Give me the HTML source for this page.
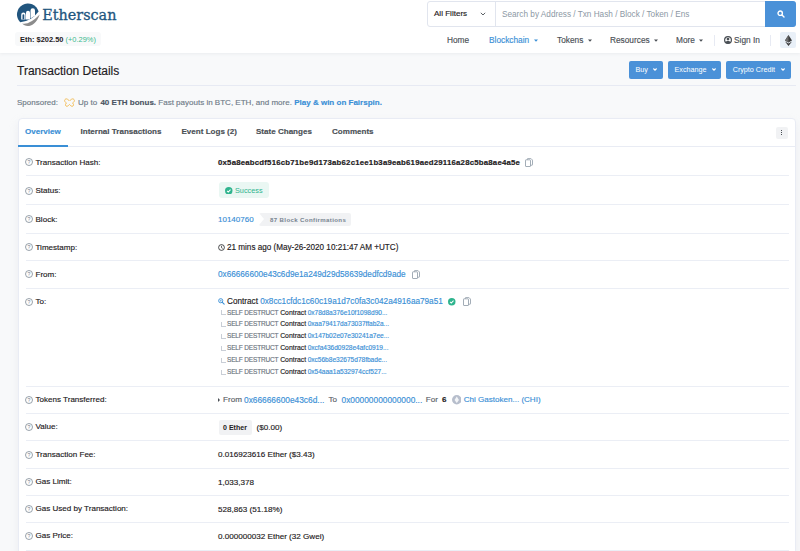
<!DOCTYPE html>
<html><head><meta charset="utf-8">
<style>
*{box-sizing:border-box;margin:0;padding:0}
html,body{width:800px;height:551px;overflow:hidden;background:#f8f9fa;font-family:"Liberation Sans",Arial,sans-serif;font-size:8px;color:#1e2022}
a{color:#3a8fd6;text-decoration:none}
.abs{position:absolute}
#hdr{position:absolute;left:0;top:0;width:800px;height:53px;background:#fff;box-shadow:0 1px 3px rgba(140,152,164,.12)}
.logo-t{position:absolute;left:42.200px;top:5.300px;font-family:"DejaVu Serif","Liberation Serif",serif;font-size:14.400px;color:#21557e;line-height:20px;-webkit-text-stroke:.3px #21557e}
.price{position:absolute;left:15px;top:32px;width:86px;height:14px;background:#f8f9fa;border-radius:3px;font-size:7.450px;line-height:15.200px;padding-left:5px;color:#1e2022;font-weight:bold;white-space:nowrap}
.price span{color:#3cb98f;font-weight:normal}
.search{position:absolute;left:427px;top:1px;width:369px;height:26px;border:1px solid #e1e5ee;border-radius:3px;background:#fff}
.search .f{position:absolute;left:0;top:0;width:68px;height:24px;border-right:1px solid #e1e5ee;line-height:24px;padding-left:6px;font-size:8.050px;color:#1e2022}
.search .i{position:absolute;left:74px;top:0;line-height:25.400px;font-size:8.230px;color:#8c98a4}
.search .b{position:absolute;right:-1px;top:-1px;width:31px;height:26px;background:#4a91d8;border-radius:0 3px 3px 0}
.nav{position:absolute;top:35px;font-size:8.300px;line-height:10px;color:#4a4f55;white-space:nowrap}
.chev{display:inline-block;width:4px;height:3px;margin-left:4.500px;vertical-align:1px}
h1{position:absolute;left:17px;top:64px;font-size:12px;font-weight:normal;color:#1e2022;line-height:14px}
.btn{position:absolute;top:61.200px;height:17.800px;background:#4a91d8;color:#fff;border-radius:2px;font-size:7.200px;line-height:17.500px;white-space:nowrap}
.hr{position:absolute;left:17px;width:779px;height:1px;background:#e7eaf3}
.spon{position:absolute;top:97.500px;font-size:8px;line-height:10px;color:#6f7b88;white-space:nowrap}
.spon b{color:#4b5563}
#card{position:absolute;left:17.500px;top:118px;width:778.500px;height:440px;background:#fff;border:1px solid #e9ecf4;border-radius:4px 4px 0 0;box-shadow:0 4px 10px rgba(189,197,209,.2)}
.tab{position:absolute;top:127px;font-size:8.050px;font-weight:bold;color:#4a4f55;line-height:10px;white-space:nowrap}
.row-l,.row-v,.nav,.tab,.sub,h1,.spon,.search .f{-webkit-text-stroke:.15px currentColor}
.row-l{position:absolute;left:35.500px;font-size:8.050px;line-height:10px;color:#1e2022;white-space:nowrap}
.q{position:absolute;left:25px;width:8px;height:8px}
.row-v{position:absolute;left:218px;font-size:8.100px;line-height:10px;color:#1e2022;white-space:nowrap}
.line{position:absolute;left:25.500px;width:763.500px;height:1px;background:#ebeef5}
.sub{position:absolute;left:227px;font-size:6.500px;line-height:8px;color:#6c757e;white-space:nowrap}
.sub b{font-weight:normal;color:#1e2022;font-size:6.850px;margin:0 1.600px 0 1.800px}.sd{font-size:6.500px;letter-spacing:-.16px}.sub a{font-size:6.550px}
.sub:before{content:"";position:absolute;left:-5.800px;top:1.500px;width:4px;height:4px;border-left:1px solid #c9ced6;border-bottom:1px solid #c9ced6}
.copy{position:absolute;width:8px;height:9px}
.ad{font-size:8.200px}
</style></head><body>
<div id="hdr"></div>
<svg class="abs" style="left:16px;top:2px" width="26" height="26" viewBox="0 0 26 26">
<path d="M4.200 20.200A11 11 0 1 1 22.600 9.600Q15.100 19.700 4.200 20.200z" fill="#21557e"/>
<path d="M23.700 12.400Q13.500 23 6.200 21.500C9.500 25.800 19 25.800 23.700 12.400z" fill="#8c8c8c"/>
<path d="M5.200 17.400v-4.600a2.200 2.200 0 0 1 4.400 0v4.600z M10 17.400v-6.600a2 2 0 0 1 4 0v6.600z M14.500 16.500v-8a2.250 2.250 0 0 1 4.500 0v5.300z" fill="#fff"/>
<path d="M6.500 17.200v-4.100a.9.900 0 0 1 1.800 0v4.100z" fill="#21557e"/>
</svg>
<div class="logo-t">Etherscan</div>
<div class="price">Eth: $202.50 <span>(+0.29%)</span></div>
<div class="search"><div class="f">All Filters</div><div class="i">Search by Address / Txn Hash / Block / Token / Ens</div><div class="b"></div></div>
<svg class="abs" style="left:480px;top:12px" width="6" height="4" viewBox="0 0 6 4"><path d="M.8.8 3 3 5.200.8" fill="none" stroke="#4a4f55" stroke-width=".9"/></svg>
<svg class="abs" style="left:776.500px;top:9.500px" width="8" height="8" viewBox="0 0 8 8"><circle cx="3.200" cy="3.200" r="2.200" fill="none" stroke="#fff" stroke-width="1.400"/><path d="M5 5 7 7" stroke="#fff" stroke-width="1.400" stroke-linecap="round"/></svg>
<div class="nav" style="left:447px">Home</div>
<div class="nav" style="left:489px;color:#3a8fd6">Blockchain<svg class="chev" viewBox="0 0 4 3"><path d="M0 .4H4L2 2.800z" fill="#3a8fd6"/></svg></div>
<div class="nav" style="left:557px">Tokens<svg class="chev" viewBox="0 0 4 3"><path d="M0 .4H4L2 2.800z" fill="#4a4f55"/></svg></div>
<div class="nav" style="left:610px">Resources<svg class="chev" viewBox="0 0 4 3"><path d="M0 .4H4L2 2.800z" fill="#4a4f55"/></svg></div>
<div class="nav" style="left:676px">More<svg class="chev" viewBox="0 0 4 3"><path d="M0 .4H4L2 2.800z" fill="#4a4f55"/></svg></div>
<div class="abs" style="left:713.500px;top:35px;width:1px;height:11px;background:#e7eaf3"></div>
<div class="nav" style="left:734px">Sign In</div>
<svg class="abs" style="left:724px;top:36px" width="8" height="8" viewBox="0 0 8 8"><circle cx="4" cy="4" r="3.400" fill="none" stroke="#4a4f55" stroke-width="1.200"/><circle cx="4" cy="3.100" r="1.400" fill="#4a4f55"/><path d="M1.400 6.200c.8-1.500 4.400-1.500 5.200 0-1 1.600-4.200 1.600-5.200 0z" fill="#4a4f55"/></svg>
<div class="abs" style="left:769.500px;top:35px;width:1px;height:11px;background:#e7eaf3"></div>
<div class="abs" style="left:780px;top:32px;width:16px;height:16px;background:#e9f0f8;border-radius:2px"></div>
<svg class="abs" style="left:784.800px;top:35px" width="7" height="11" viewBox="0 0 7 11"><path d="M3.500 0 7 5.600 3.500 7.600 0 5.600z" fill="#3c3c3d"/><path d="M3.500 0V7.600L0 5.600z" fill="#6b6b6c"/><path d="M3.500 8.400 7 6.400 3.500 11 0 6.400z" fill="#3c3c3d"/></svg>
<h1>Transaction Details</h1>
<div class="btn" style="left:629px;width:33.500px;padding-left:6.500px">Buy<svg class="chev" style="margin-left:5.500px" viewBox="0 0 4 3"><path d="M.4.500 2 2.200 3.600.5" fill="none" stroke="#fff" stroke-width="1.100"/></svg></div>
<div class="btn" style="left:668px;width:53px;padding-left:6.500px">Exchange<svg class="chev" style="margin-left:5.500px" viewBox="0 0 4 3"><path d="M.4.500 2 2.200 3.600.5" fill="none" stroke="#fff" stroke-width="1.100"/></svg></div>
<div class="btn" style="left:726px;width:65px;padding-left:6.700px">Crypto Credit<svg class="chev" style="margin-left:5.500px" viewBox="0 0 4 3"><path d="M.4.500 2 2.200 3.600.5" fill="none" stroke="#fff" stroke-width="1.100"/></svg></div>
<div class="hr" style="top:85px"></div>
<div class="spon" style="left:17px">Sponsored:</div>
<svg class="abs" style="left:63px;top:97px" width="13" height="11" viewBox="0 0 13 11"><path d="M2 2.500c1.500-1.500 3 0 4.500 1.500C8 2.500 9.500 1 11 2.500c1.200 1.500-.5 3-1.500 3.500 1 .8 1.500 2 .5 3-1.200 1-2.500-.5-3.500-1.500C5.500 8.500 4 10 3 9c-1-1-.5-2.200.5-3C2.500 5.500.8 4 2 2.500z" fill="none" stroke="#f2b84a" stroke-width=".9"/></svg>
<div class="spon" style="left:78px;font-size:8.030px">Up to <b style="margin-left:1px">40 ETH bonus.</b> Fast payouts in BTC, ETH, and more. <a style="font-weight:bold">Play &amp; win on Fairspin.</a></div>
<div id="card"></div>
<div class="tab" style="left:25px;color:#3a8fd6">Overview</div>
<div class="tab" style="left:80.500px">Internal Transactions</div>
<div class="tab" style="left:181.500px">Event Logs (2)</div>
<div class="tab" style="left:256px">State Changes</div>
<div class="tab" style="left:332px">Comments</div>
<div class="abs" style="left:18.500px;top:145.600px;width:776.500px;height:1px;background:#e9ecf4"></div>
<div class="abs" style="left:18px;top:144.500px;width:50px;height:2px;background:#3a8fd6"></div>
<div class="abs" style="left:776px;top:127.200px;width:12px;height:12px;background:#f1f2f4;border-radius:2px"></div>
<div class="abs" style="left:781.200px;top:130.400px;width:1.100px;height:1.100px;background:#4a4f55;box-shadow:0 2px 0 #4a4f55,0 4px 0 #4a4f55"></div>

<svg class="q" style="top:158.200px" viewBox="0 0 8 8"><circle cx="4" cy="4" r="3.500" fill="none" stroke="#77838f" stroke-width=".75"/><text x="4" y="5.900" font-size="5.200" text-anchor="middle" fill="#77838f" font-family="Liberation Sans,sans-serif">?</text></svg><div class="row-l" style="top:157.600px">Transaction Hash:</div>
<div class="row-v" style="top:157.800px;font-weight:bold;font-size:7.800px;letter-spacing:.21px;-webkit-text-stroke:.2px #1e2022">0x5a8eabcdf516cb71be9d173ab62c1ee1b3a9eab619aed29116a28c5ba8ae4a5e</div>
<svg class="copy" style="left:524.500px;top:157.500px" viewBox="0 0 8 9"><path d="M2.500 1.800V.9a.5.500 0 0 1 .5-.5h2.800L7.500 2.100v4.600a.5.500 0 0 1-.5.500H5.500" fill="none" stroke="#8c98a4" stroke-width=".8"/><rect x=".5" y="1.800" width="5" height="6.700" rx=".5" fill="#fff" stroke="#8c98a4" stroke-width=".8"/></svg>
<div class="line" style="top:175px"></div>
<svg class="q" style="top:186.500px" viewBox="0 0 8 8"><circle cx="4" cy="4" r="3.500" fill="none" stroke="#77838f" stroke-width=".75"/><text x="4" y="5.900" font-size="5.200" text-anchor="middle" fill="#77838f" font-family="Liberation Sans,sans-serif">?</text></svg><div class="row-l" style="top:185.600px">Status:</div>
<div class="abs" style="left:219px;top:182px;width:50px;height:16px;background:#eaf7f3;border-radius:3px;color:#2fb48e;font-size:7.300px;line-height:17.800px;padding-left:16px">Success</div>
<svg class="abs" style="left:225px;top:186.500px" width="7.500" height="7.500" viewBox="0 0 8 8"><circle cx="4" cy="4" r="4" fill="#2fb48e"/><path d="M2.200 4.100 3.500 5.400 5.900 2.900" fill="none" stroke="#fff" stroke-width="1.100"/></svg>
<div class="line" style="top:204px"></div>
<svg class="q" style="top:215.200px" viewBox="0 0 8 8"><circle cx="4" cy="4" r="3.500" fill="none" stroke="#77838f" stroke-width=".75"/><text x="4" y="5.900" font-size="5.200" text-anchor="middle" fill="#77838f" font-family="Liberation Sans,sans-serif">?</text></svg><div class="row-l" style="top:214.500px">Block:</div>
<div class="row-v" style="top:214.500px;font-size:8px"><a>10140760</a></div>
<div class="abs" style="left:259px;top:212.500px;width:92px;height:13.300px;background:#f1f2f4;border-radius:2px;color:#77838f;font-size:6.100px;line-height:13.600px;padding-left:11px;letter-spacing:.37px;font-weight:bold;white-space:nowrap">87 Block Confirmations</div>
<div class="abs" style="left:258.500px;top:212.500px;width:0;height:0;border-top:6.650px solid transparent;border-bottom:6.650px solid transparent;border-left:5px solid #fff"></div>
<div class="line" style="top:233px"></div>
<svg class="q" style="top:243.200px" viewBox="0 0 8 8"><circle cx="4" cy="4" r="3.500" fill="none" stroke="#77838f" stroke-width=".75"/><text x="4" y="5.900" font-size="5.200" text-anchor="middle" fill="#77838f" font-family="Liberation Sans,sans-serif">?</text></svg><div class="row-l" style="top:242.500px">Timestamp:</div>
<div class="row-v" style="top:242.600px;left:227px;font-size:8.130px">21 mins ago (May-26-2020 10:21:47 AM +UTC)</div>
<svg class="abs" style="left:218px;top:244.300px" width="7" height="7" viewBox="0 0 7 7"><circle cx="3.500" cy="3.500" r="2.900" fill="none" stroke="#1e2022" stroke-width=".8"/><path d="M3.500 1.800v1.900l1.200.7" fill="none" stroke="#1e2022" stroke-width=".7"/></svg>
<div class="line" style="top:260px"></div>
<svg class="q" style="top:270.400px" viewBox="0 0 8 8"><circle cx="4" cy="4" r="3.500" fill="none" stroke="#77838f" stroke-width=".75"/><text x="4" y="5.900" font-size="5.200" text-anchor="middle" fill="#77838f" font-family="Liberation Sans,sans-serif">?</text></svg><div class="row-l" style="top:269.750px">From:</div>
<div class="row-v ad" style="top:270px"><a>0x66666600e43c6d9e1a249d29d58639dedfcd9ade</a></div>
<svg class="copy" style="left:412px;top:269.700px" viewBox="0 0 8 9"><path d="M2.500 1.800V.9a.5.500 0 0 1 .5-.5h2.800L7.500 2.100v4.600a.5.500 0 0 1-.5.500H5.500" fill="none" stroke="#8c98a4" stroke-width=".8"/><rect x=".5" y="1.800" width="5" height="6.700" rx=".5" fill="#fff" stroke="#8c98a4" stroke-width=".8"/></svg>
<div class="line" style="top:288px"></div>
<svg class="q" style="top:298px" viewBox="0 0 8 8"><circle cx="4" cy="4" r="3.500" fill="none" stroke="#77838f" stroke-width=".75"/><text x="4" y="5.900" font-size="5.200" text-anchor="middle" fill="#77838f" font-family="Liberation Sans,sans-serif">?</text></svg><div class="row-l" style="top:297.400px">To:</div>
<div class="row-v" style="top:297.250px;left:227px;font-size:8.200px">Contract <a>0x8cc1cfdc1c60c19a1d7c0fa3c042a4916aa79a51</a></div>
<svg class="abs" style="left:218px;top:298.300px" width="6.800" height="6.800" viewBox="0 0 7.500 7.500"><circle cx="3" cy="3" r="2.300" fill="none" stroke="#3a8fd6" stroke-width="1"/><path d="M4.800 4.800 6.800 6.800" stroke="#3a8fd6" stroke-width="1.200" stroke-linecap="round"/><path d="M1.900 3h2.200M3 1.900v2.200" stroke="#3a8fd6" stroke-width=".6"/></svg>
<svg class="abs" style="left:448px;top:298px" width="7.500" height="7.500" viewBox="0 0 8 8"><circle cx="4" cy="4" r="4" fill="#2fb48e"/><path d="M2.200 4.100 3.500 5.400 5.900 2.900" fill="none" stroke="#fff" stroke-width="1.100"/></svg>
<svg class="copy" style="left:462.500px;top:297.200px" viewBox="0 0 8 9"><path d="M2.500 1.800V.9a.5.500 0 0 1 .5-.5h2.800L7.500 2.100v4.600a.5.500 0 0 1-.5.500H5.500" fill="none" stroke="#8c98a4" stroke-width=".8"/><rect x=".5" y="1.800" width="5" height="6.700" rx=".5" fill="#fff" stroke="#8c98a4" stroke-width=".8"/></svg>
<div class="sub" style="top:308.500px"><span class="sd">SELF DESTRUCT</span><b>Contract</b><a>0x78d8a376e10f1098d90...</a></div>
<div class="sub" style="top:320.200px"><span class="sd">SELF DESTRUCT</span><b>Contract</b><a>0xaa79417da73037ffab2a...</a></div>
<div class="sub" style="top:332px"><span class="sd">SELF DESTRUCT</span><b>Contract</b><a>0x147b02e07e30241a7ee...</a></div>
<div class="sub" style="top:344px"><span class="sd">SELF DESTRUCT</span><b>Contract</b><a>0xcfa436d0928e4afc0919...</a></div>
<div class="sub" style="top:356px"><span class="sd">SELF DESTRUCT</span><b>Contract</b><a>0xc56b8e32675d78fbade...</a></div>
<div class="sub" style="top:368px"><span class="sd">SELF DESTRUCT</span><b>Contract</b><a>0x54aaa1a532974ccf527...</a></div>
<div class="line" style="top:386px"></div>
<svg class="q" style="top:396px" viewBox="0 0 8 8"><circle cx="4" cy="4" r="3.500" fill="none" stroke="#77838f" stroke-width=".75"/><text x="4" y="5.900" font-size="5.200" text-anchor="middle" fill="#77838f" font-family="Liberation Sans,sans-serif">?</text></svg><div class="row-l" style="top:395.200px">Tokens Transferred:</div>
<div class="abs" style="left:218px;top:397.500px;width:0;height:0;border-top:2px solid transparent;border-bottom:2px solid transparent;border-left:2.500px solid #4a4f55"></div>
<div class="row-v" style="top:394.500px;left:223px;color:#5a6169">From</div>
<div class="row-v ad" style="top:394.500px;left:244px;font-size:8.350px"><a>0x66666600e43c6d...</a></div>
<div class="row-v" style="top:394.500px;left:328.500px;color:#5a6169">To</div>
<div class="row-v ad" style="top:394.500px;left:341.500px;font-size:8.350px"><a>0x00000000000000...</a></div>
<div class="row-v" style="top:394.500px;left:425.700px;color:#5a6169">For</div>
<div class="row-v" style="top:394.500px;left:442px;font-weight:bold">6</div>
<svg class="abs" style="left:451.700px;top:395px" width="9.500" height="9.500" viewBox="0 0 10 10"><circle cx="5" cy="5" r="5" fill="#b7becc"/><path d="M5 1.600 7.300 5.200 5 8.400 2.700 5.200z" fill="#f3f5f8"/></svg>
<div class="row-v" style="top:394.500px;left:463.700px;font-size:8.050px"><a>Chi Gastoken... (CHI)</a></div>
<div class="line" style="top:413px"></div>
<svg class="q" style="top:423.200px" viewBox="0 0 8 8"><circle cx="4" cy="4" r="3.500" fill="none" stroke="#77838f" stroke-width=".75"/><text x="4" y="5.900" font-size="5.200" text-anchor="middle" fill="#77838f" font-family="Liberation Sans,sans-serif">?</text></svg><div class="row-l" style="top:422.250px">Value:</div>
<div class="abs" style="left:218.500px;top:419.500px;width:33px;height:15px;background:#f1f2f4;border-radius:2px;font-size:7.050px;font-weight:bold;line-height:15.500px;text-align:center;color:#1e2022;white-space:nowrap">0 Ether</div>
<div class="row-v" style="top:422.750px;left:256.500px">($0.00)</div>
<div class="line" style="top:440.250px"></div>
<svg class="q" style="top:451px" viewBox="0 0 8 8"><circle cx="4" cy="4" r="3.500" fill="none" stroke="#77838f" stroke-width=".75"/><text x="4" y="5.900" font-size="5.200" text-anchor="middle" fill="#77838f" font-family="Liberation Sans,sans-serif">?</text></svg><div class="row-l" style="top:450px">Transaction Fee:</div>
<div class="row-v" style="top:450px">0.016923616 Ether ($3.43)</div>
<div class="line" style="top:468px"></div>
<svg class="q" style="top:478.200px" viewBox="0 0 8 8"><circle cx="4" cy="4" r="3.500" fill="none" stroke="#77838f" stroke-width=".75"/><text x="4" y="5.900" font-size="5.200" text-anchor="middle" fill="#77838f" font-family="Liberation Sans,sans-serif">?</text></svg><div class="row-l" style="top:477.400px">Gas Limit:</div>
<div class="row-v" style="top:477.500px">1,033,378</div>
<div class="line" style="top:495px"></div>
<svg class="q" style="top:505.200px" viewBox="0 0 8 8"><circle cx="4" cy="4" r="3.500" fill="none" stroke="#77838f" stroke-width=".75"/><text x="4" y="5.900" font-size="5.200" text-anchor="middle" fill="#77838f" font-family="Liberation Sans,sans-serif">?</text></svg><div class="row-l" style="top:504.250px">Gas Used by Transaction:</div>
<div class="row-v" style="top:504.500px">528,863 (51.18%)</div>
<div class="line" style="top:522.250px"></div>
<svg class="q" style="top:532.300px" viewBox="0 0 8 8"><circle cx="4" cy="4" r="3.500" fill="none" stroke="#77838f" stroke-width=".75"/><text x="4" y="5.900" font-size="5.200" text-anchor="middle" fill="#77838f" font-family="Liberation Sans,sans-serif">?</text></svg><div class="row-l" style="top:531.250px">Gas Price:</div>
<div class="row-v" style="top:531.500px">0.000000032 Ether (32 Gwei)</div>
<div class="line" style="top:549.500px"></div>
</body></html>
